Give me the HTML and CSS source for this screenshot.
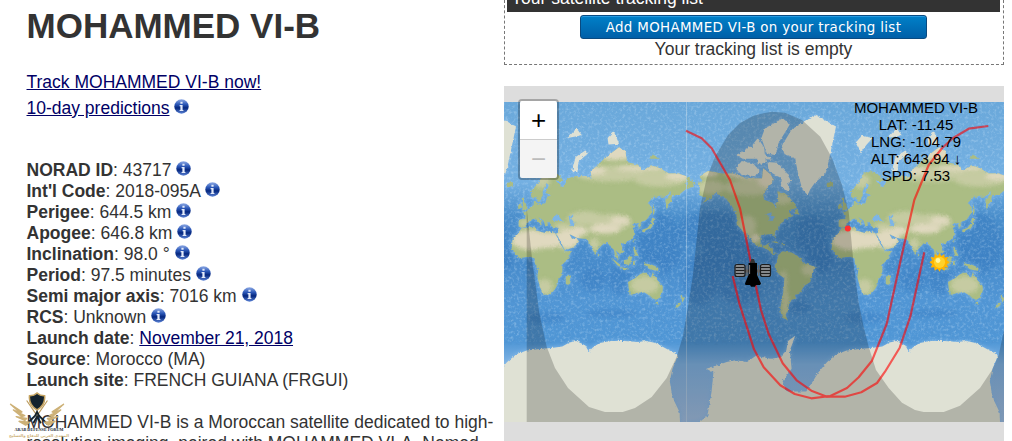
FILE: index.html
```
<!DOCTYPE html>
<html lang="en">
<head>
    <meta charset="UTF-8">
    <meta name="viewport" content="width=device-width, initial-scale=1.0">
    <title>MOHAMMED VI-B</title>
    <link rel="stylesheet" href="styles.css">
</head>
<body>
    <svg class="defs" width="0" height="0">
        <defs>
            <linearGradient id="infoBlue" x1="0" y1="0" x2="0" y2="1">
                <stop offset="0" stop-color="#8da9e4"/>
                <stop offset="0.35" stop-color="#2c58b8"/>
                <stop offset="0.6" stop-color="#04267e"/>
                <stop offset="1" stop-color="#5b83d6"/>
            </linearGradient>
            <symbol id="info" viewBox="0 0 15 15">
                <circle cx="7.5" cy="7.5" r="7.2" fill="url(#infoBlue)"/>
                <path d="M6.4 2.8h2.2v2H6.4zM5.6 6.1h3v4.8h.8v1.1H5.6v-1.1h.8V7.2h-.8z" fill="#e4ebfa"/>
            </symbol>
        </defs>
    </svg>

    <div class="page">
        <div class="details">
            <h1>MOHAMMED VI-B</h1>
            <div class="links">
                <div><a href="#">Track MOHAMMED VI-B now!</a></div>
                <div><a href="#">10-day predictions</a> <svg class="info"><use href="#info"/></svg></div>
            </div>
            <div class="data">
                <div><b>NORAD ID</b>: 43717 <svg class="info"><use href="#info"/></svg></div>
                <div><b>Int'l Code</b>: 2018-095A <svg class="info"><use href="#info"/></svg></div>
                <div><b>Perigee</b>: 644.5 km <svg class="info"><use href="#info"/></svg></div>
                <div><b>Apogee</b>: 646.8 km <svg class="info"><use href="#info"/></svg></div>
                <div><b>Inclination</b>: 98.0 ° <svg class="info"><use href="#info"/></svg></div>
                <div><b>Period</b>: 97.5 minutes <svg class="info"><use href="#info"/></svg></div>
                <div><b>Semi major axis</b>: 7016 km <svg class="info"><use href="#info"/></svg></div>
                <div><b>RCS</b>: Unknown <svg class="info"><use href="#info"/></svg></div>
                <div><b>Launch date</b>: <a href="#">November 21, 2018</a></div>
                <div><b>Source</b>: Morocco (MA)</div>
                <div><b>Launch site</b>: FRENCH GUIANA (FRGUI)</div>
            </div>
            <p class="about">MOHAMMED VI-B is a Moroccan satellite dedicated to high-<br>resolution imaging, paired with MOHAMMED VI-A. Named</p>
        </div>

        <div class="side">
            <div class="tracking">
                <div class="tracking-title">Your satellite tracking list</div>
                <button class="add">Add MOHAMMED VI-B on your tracking list</button>
                <div class="empty">Your tracking list is empty</div>
            </div>

            <div class="map">
                <svg class="world" viewBox="504 102 500 320">
                    <defs>
                        <linearGradient id="sea" x1="0" y1="0" x2="0" y2="1">
                            <stop offset="0" stop-color="#6aa8da"/>
                            <stop offset="0.25" stop-color="#74b0e2"/>
                            <stop offset="0.36" stop-color="#4a8ecb"/>
                            <stop offset="0.5" stop-color="#478bcb"/>
                            <stop offset="0.62" stop-color="#5196d5"/>
                            <stop offset="0.75" stop-color="#5097d6"/>
                            <stop offset="0.82" stop-color="#82b4e4"/>
                            <stop offset="1" stop-color="#a3bfe2"/>
                        </linearGradient>
                        <filter id="grain" x="0" y="0" width="1" height="1">
                            <feTurbulence type="fractalNoise" baseFrequency="0.32" numOctaves="3" seed="4"/>
                            <feColorMatrix values="0 0 0 0 0.08  0 0 0 0 0.28  0 0 0 0 0.6  2.6 0 0 0 -1.22"/>
                        </filter>
                        <filter id="foam" x="0" y="0" width="1" height="1">
                            <feTurbulence type="fractalNoise" baseFrequency="0.35" numOctaves="3" seed="9"/>
                            <feColorMatrix values="0 0 0 0 0.75  0 0 0 0 0.88  0 0 0 0 1  0 2.6 0 0 -1.25"/>
                        </filter>
                        <filter id="rough"><feTurbulence type="fractalNoise" baseFrequency="0.35" numOctaves="2" seed="2" result="n"/><feDisplacementMap in="SourceGraphic" in2="n" scale="3" xChannelSelector="R" yChannelSelector="G"/></filter>
                        <filter id="soft" x="-0.3" y="-0.3" width="1.6" height="1.6"><feGaussianBlur stdDeviation="2"/></filter>
                        <clipPath id="landClip"><path id="clipPathLand"/></clipPath>
                        <g id="water">
                            <g id="deep" fill="#2f72ba" opacity="0.32" filter="url(#soft)"></g>
                            <path id="shelf" class="shelf" filter="url(#soft)"/>
                        </g>
                        <g id="ground" filter="url(#rough)">
                            <path id="land" fill="#abbd84"/>
                            <g clip-path="url(#landClip)">
                                <g id="pale" fill="#cfd0ac" opacity="0.75" filter="url(#soft)"></g>
                                <g id="dry" fill="#e0d9bf" filter="url(#soft)"></g>
                            </g>
                            <path id="ice" fill="#dfe1d4"/>
                            <path id="lakes" fill="#7db5e6"/>
                        </g>
                    </defs>
                    <rect x="504" y="102" width="500" height="320" fill="url(#sea)"/>
                    <use href="#water" x="526.7"/>
                    <use href="#water" x="846.7"/>
                    <rect x="504" y="200" width="500" height="145" filter="url(#grain)" opacity="0.45"/>
                    <rect x="504" y="102" width="500" height="240" filter="url(#foam)" opacity="0.28"/>
                    <use href="#ground" x="526.7"/>
                    <use href="#ground" x="846.7"/>
                    <path d="M686.5 102V422" stroke="#dfe9ef" stroke-width="0.6" opacity="0.6"/>
                    <path class="night" d="M526.7 208L532.7 265 535 280 539.3 313 546.7 346.7 555 368 568 388 589 407 605 412H622.7L635 408 651.7 397 666.7 378 676.7 356.7 682.7 336.7 688 306.7 692.7 276.7 694.3 262 700 208 706.7 178 715 156.7 728 135 740 123 753 116 760 114 772 111.7 785 112.7 802 120 820.3 136.7 832 158 842 185 848.7 211.7 853.7 265 858.7 303 863.7 326.7 868.7 346.7 876 370 888.7 388 902 402.7 915 410 923.7 412H943.7L960 405.7 980 388 992 370 998.7 355 1004 330V422H526.7z"/>
                    <g class="orbit">
                        <path d="M686 130.7L701.7 138.3 711.7 148.3 730 180 740 208.3 750.7 261.7 756 286.7 761 310 768.7 334 782.7 363.3 797 380.7 811.3 390.7 827 396.7H844.7L861.3 392.3 877 383 885 371.7 899.7 347.7 910.3 316.7 924.3 252.3"/>
                        <path d="M732.7 276L739.3 303.3 754 349.3 763.7 367.3 780.3 385.3 794.7 394 811.3 398.3 830.3 396 847 388 858.7 377.3 872 360.7 886.7 324 900.7 260 914.3 200 928.7 165 942 148.3 952.7 138.3 968.7 128.7 988.3 126"/>
                    </g>
                    <circle cx="847.8" cy="228.4" r="3" fill="#ff3030"/>
                    <!-- sun -->
                    <path d="M939.5 253l1.8 3 3-2 .4 3.5 3.6-.4-1.5 3.2 2.8 2-2.8 2 1.5 3.3-3.6-.4-.4 3.5-3-1.9-1.8 3-1.8-3-3 1.9-.4-3.5-3.6.4 1.5-3.3-2.8-2 2.8-2-1.5-3.2 3.6.4.4-3.5 3 2z" fill="#ffb400"/>
                    <circle cx="939.5" cy="262.3" r="5.6" fill="#ffd22a"/>
                    <circle cx="938" cy="260.5" r="2.4" fill="#fff6a0"/>
                    <!-- satellite -->
                    <path d="M744 271h17" stroke-width="3" stroke="#555"/>
                    <g fill="#85888b" stroke="#1c1c1c" stroke-width="1.2">
                        <rect x="735" y="264.5" width="10" height="12" rx="2"/>
                        <rect x="760.5" y="264.5" width="10" height="12" rx="2"/>
                        <path d="M735.5 267.5h9M735.5 270.5h9M735.5 273.5h9M761 267.5h9M761 270.5h9M761 273.5h9"/>
                    </g>
                    <path d="M747 265v11M758.5 265v11" stroke="#666" stroke-width="1.4"/>
                    <path d="M749.8 263l1.6-4h2.4l1.6 4z" fill="#333"/>
                    <path d="M748.5 263h8.5v12l4 8.5-1 1.5h-4l-1 1.8h-4l-1-1.8h-4.5l-.5-1.5 3.5-8.5z" fill="#000"/>
                    <path d="M749.5 265v9" stroke="#777" stroke-width="1.2"/>
                </svg>
                <div class="zoom">
                    <div class="zoom-in">+</div>
                    <div class="zoom-out">−</div>
                </div>
                <div class="position">
                    MOHAMMED VI-B<br>
                    LAT: -11.45<br>
                    LNG: -104.79<br>
                    ALT: 643.94 ↓<br>
                    SPD: 7.53
                </div>
            </div>
        </div>

        <div class="forum">
            <svg class="forum-logo" viewBox="0 0 60 37">
                <path d="M21 4q5 0 8-3 3 3 8 3 1 10-8 15Q20 14 21 4z" fill="#14232e" stroke="#c5a462" stroke-width="1.6"/>
                <path d="M29 25L18 9M29 25L40 9" stroke="#bb9b5d" stroke-width="1.2"/>
                <path d="M18 34l9-9 2-4 2 4 9 9M25 33l4-7 4 7" fill="none" stroke="#14232e" stroke-width="2"/>
                <path d="M1 13l12 8-2 1zM4 19l12 6-3 1zM7 26l11 2-2 2zM10 31l11 1-4 3zM57 13l-12 8 2 1zM54 19l-12 6 3 1zM51 26l-11 2 2 2zM48 31l-11 1 4 3z" fill="#cdb177" stroke="#cdb177" stroke-width="1.5" stroke-linejoin="round"/>
            </svg>
            <div class="forum-name">ARAB DEFENSE FORUM</div>
            <div class="forum-arabic" lang="ar" dir="rtl">المنتدى العربي للدفاع والتسليح</div>
        </div>
    </div>

    <script>
        // outlines are lon, lat pairs
        const land = [
            // Europe and Asia
            [-9,43, -9,37, -5.5,36, -2,37, 0,39, 3,42, 7,43.5, 10,44, 13,41, 16,38, 18,40, 13,45, 19,42, 21,37, 24,38, 23,40.5, 27,41, 26,39, 28,36.5, 36,36, 35,31.5, 33,30, 35,28, 39,21, 43,13, 52,16, 59,22, 56,26, 51,25, 48,30, 57,26, 67,25, 70,21, 73,17, 77,8, 80,14, 87,21, 91,22, 94,17, 98,14, 99,8, 103,1.5, 103,6, 100,13, 105,9, 109,12, 106,20, 111,21, 117,24, 122,30, 119,35, 122,38, 118,39, 125,40, 126,35, 129,36, 128,40, 135,43, 140,48, 141,53, 136,55, 143,59, 155,59, 164,62, 156,57, 157,51, 162,56, 164,60, 171,60, 179,63, 179.9,69, 170,70, 160,70, 150,72, 140,73, 130,71, 127,73, 113,74, 111,77, 104,78, 87,75, 80,73, 72,71, 73,68, 68,69, 60,69, 54,69, 46,68, 44,66, 40,64, 33,67, 41,67, 38,69, 28,71, 19,70, 13,66, 5,62, 5,59, 8,58, 11,59, 13,55.5, 16,57, 18,60, 18,62, 22,66, 25,65, 21,61, 28,60, 23,59, 21,55, 12,54, 10,57, 8,56, 8,54, 4,52, 0,49.5, -4,48.5, -1,46, -2,43.5],
            [-179.9,69, -170,66, -174,64, -179.9,63],
            // Africa
            [-6,35.5, 10,37, 11,33.5, 20,31, 22,33, 32,31, 37,21, 43,12, 51,12, 46,3, 40,-3, 40,-14, 35,-20, 35,-24, 32,-29, 27,-34, 19,-34.5, 15,-27, 12,-17, 13,-9, 9,-1, 9,4, 4,6, -8,4.5, -13,9, -17,15, -16,24, -10,30],
            [44,-16, 50,-15, 47,-25, 44,-24],
            // Britain, Ireland, Iceland
            [-5,50, 1,51, 0,53, -3,56, -3,58.5, -6,58, -4,54],
            [-10,52, -6,52, -6,55, -9,54.5],
            [-22,64, -14,65, -16,66.5, -23,66],
            // New Siberian islands
            [138,75, 150,75, 142,76.2],
            // Japan, Sakhalin, Taiwan
            [130,31, 135,34, 141,36, 142,40, 145,43.5, 141,45, 140,40, 136,36, 130,34],
            [142,46, 144,49, 143,54, 142,52],
            [120,22, 122,25, 120,24],
            // south east Asia
            [95,5, 104,-2, 106,-6, 102,-4],
            [105,-6, 114,-7, 115,-8.5, 106,-7.5],
            [109,1, 113,3, 117,7, 119,5, 117,1, 115,-4, 110,-2],
            [119,-5, 120,1, 125,1.5, 121,0, 123,-4, 121,-3],
            [131,-1, 141,-3, 147,-6, 150,-10, 142,-9, 138,-8],
            [120,14, 122,18, 122,14, 126,7, 122,7],
            [80,6, 82,8, 80,9.5],
            // Australia, Tasmania, New Zealand
            [114,-22, 122,-18, 127,-14, 131,-12, 136,-12, 136,-15, 140,-17.5, 142,-11, 146,-19, 153,-26, 153,-31, 150,-37, 146,-39, 140,-37.5, 136,-34, 131,-31.5, 124,-33, 116,-35, 115,-30],
            [145,-41, 148,-41, 147,-43.5],
            [173,-35, 178,-38, 175,-41.5],
            [173,-41, 173,-43.5, 168,-46.5, 167,-45],
            // North and Central America
            [-168,66, -162,67, -166,69, -156,71, -140,70, -128,70, -115,68.5, -105,68, -95,68, -94,72, -85,69.5, -82,67, -88,65, -94,60, -92,57, -82,55, -80,51.5, -79,55, -77,57, -78,62, -70,61, -65,59, -61,56, -56,52, -66,50, -64,48, -60,46, -66,44, -70,43.5, -71,41.5, -75,39, -76,35, -81,31, -80,26, -82,28, -84,30, -90,29.5, -97,27.5, -97,22, -95,18, -91,18.5, -87,21.5, -88,16, -83,15, -83,10, -78,9, -83,8, -88,13, -95,16, -105,20, -107,24, -112,30, -114,31, -110,23, -115,29, -118,34, -124,39, -124,47, -130,54, -138,59, -148,61, -153,58, -162,55, -158,58, -166,60, -165,64],
            [-59,47.5, -53,47, -56,51.5],
            [-85,22, -75,20, -80,23],
            [-74,18.5, -68.5,18.5, -72,20],
            // South America
            [-77,8, -72,12, -62,10.5, -52,5, -50,0, -44,-2.5, -35,-6, -39,-14, -41,-22, -48,-26, -53,-33.5, -58,-35, -57,-38, -62,-39, -65,-43, -66,-47, -69,-51, -66,-55, -73,-52, -75,-47, -73,-40, -71,-30, -70,-18, -76,-14, -81,-6, -80,-2, -78,3],
        ];

        const ice = [
            // Greenland
            [-44,60, -50,63, -54,69, -58,75, -70,76.3, -73,78.3, -62,81.5, -35,83.6, -12,82, -18,77, -22,72, -24,70, -36,66, -41,63],
            // Canadian arctic islands
            [-90,76.5, -80,76, -78,78, -75,79.5, -64,82.3, -72,83.2, -92,81.7, -96,80],
            [-124,76, -117,75, -105,75, -95,75, -84,74.7, -90,76, -98,77, -110,78.3, -116,77],
            [-100,73, -91,74, -93,78, -100,80, -106,78.5, -101,76],
            [-125,72, -118,69.5, -102,69, -98,71, -105,73.5, -118,74.3],
            [-66,62, -74,64.5, -73,68, -88,71, -89,74, -78,73.8, -68,70.5, -62,66.5, -67,66, -64,63],
            // Svalbard, Novaya Zemlya, Severnaya Zemlya, Franz Josef Land
            [10,79, 16,76.7, 22,78.5, 29,80, 17,80.4],
            [51,71, 57,70.5, 58,74, 69,76.5, 66,77.2, 55,75.5],
            [92,78.6, 104,78.8, 98,81.2, 91,80],
            [46,80, 62,80.5, 56,81.7],
            // Antarctica, with the peninsula and the Weddell and Ross seas
            [-180,-85.1, -158,-85.1, -152,-81, -150,-77, -158,-76, -145,-75, -135,-74, -125,-73.5, -112,-74, -102,-72, -95,-72.5, -85,-73, -75,-72.5, -68,-70, -66,-66, -58,-63.5, -60,-66, -64,-70, -62,-76, -72,-79, -65,-82, -50,-82, -38,-79, -32,-77, -22,-74, -12,-71.5, 0,-70, 15,-69.5, 30,-69, 40,-68.5, 48,-66.8, 56,-66, 66,-68, 70,-70.5, 74,-69, 82,-67, 95,-66, 110,-66, 125,-66.5, 135,-66, 145,-67, 155,-69, 166,-71, 170,-72, 164,-76, 161,-79, 164,-82, 172,-84, 173,-86, -180,-86],
            [-72,-86, -180,-86, -158,-84.5, -72,-84.5],
            [-72,-81, 0,-81, 165,-82, 172,-86, -72,-86],
        ];

        const lakes = [
            [47,46, 53,46, 50,44, 54,40, 53,37, 49,38],
            [28,42, 34,42, 41,41.5, 38,44, 36,46, 31,46.5],
            [-92,47, -85,48.5, -84,46, -80,45, -83,42, -87,42, -87,46],
        ];

        // centre lon, lat and the two radii in pixels
        const dry = [
            [5,24,20,10], [24,24,16,8], [46,25,12,10], [58,33,10,5], [88,35,16,5], [105,42,10,4],
            [-103,26,5,4], [-100,71,34,9], [-80,67,18,8], [100,77,22,9], [72,71,16,4], [130,72,26,3],
            [172,69,14,4], [-155,70,10,3],
        ];

        const pale = [
            [66,44,18,7], [95,41,20,8], [133,-25,14,9], [20,-27,8,8], [-112,38,9,10], [-69,-42,4,14],
            [-71,-22,4,12], [-42,-9,8,6], [-110,64,25,8], [-72,58,10,6], [95,70,35,8], [150,68,26,8],
            [-153,64,14,7], [16,67,9,7], [-3,40,5,4], [40,36,8,5], [76,20,5,6],
        ];

        const deep = [
            [-150,35,35,18], [150,20,22,30], [-135,5,25,22], [-40,30,16,18], [-30,5,12,16], [75,-20,13,12],
            [105,-20,12,15], [-55,-45,13,7], [-120,-30,22,14], [20,-53,20,6], [95,-50,26,4], [-165,-20,18,25],
        ];

        const x = lon => lon / 360 * 320;
        const y = lat => 262 - 320 / (2 * Math.PI) * Math.log(Math.tan(Math.PI / 4 + lat * Math.PI / 360));

        function outline(shapes) {
            return shapes.map(s => {
                let d = '';
                for (let i = 0; i < s.length; i += 2) {
                    d += (i ? 'L' : 'M') + x(s[i]).toFixed(1) + ' ' + y(s[i + 1]).toFixed(1);
                }
                return d + 'z';
            }).join('');
        }

        function blobs(list) {
            return list.map(([lon, lat, rx, ry]) =>
                `<ellipse cx="${x(lon)}" cy="${y(lat)}" rx="${rx}" ry="${ry}"/>`).join('');
        }

        document.getElementById('land').setAttribute('d', outline(land));
        document.getElementById('clipPathLand').setAttribute('d', outline(land));
        document.getElementById('shelf').setAttribute('d', outline(land.concat(ice)));
        document.getElementById('ice').setAttribute('d', outline(ice));
        document.getElementById('lakes').setAttribute('d', outline(lakes));
        document.getElementById('dry').innerHTML = blobs(dry);
        document.getElementById('pale').innerHTML = blobs(pale);
        document.getElementById('deep').innerHTML = blobs(deep);
    </script>
</body>
</html>
```
FILE: styles.css
```
* {
    margin: 0;
    padding: 0;
    box-sizing: border-box;
}

body {
    background: #fff;
    color: #333;
    font-family: "Liberation Sans", Arial, sans-serif;
    font-size: 17.5px;
    line-height: 21px;
    overflow: hidden;
}

.defs {
    position: absolute;
}

.page {
    position: relative;
    display: flex;
    height: 441px;
    overflow: hidden;
}

.details {
    width: 504px;
    padding: 5px 0 0 26.5px;
    white-space: nowrap;
}

h1 {
    font-size: 35px;
    line-height: 42px;
}

a {
    color: #000066;
}

.links {
    margin-top: 22px;
    line-height: 26px;
}

.data {
    margin-top: 39px;
}

.info {
    width: 15px;
    height: 15px;
    vertical-align: 0;
}

.about {
    margin-top: 21px;
}

.side {
    width: 500px;
}

.tracking {
    height: 65px;
    border: 1px dashed #777;
    border-top: 0;
    padding: 0 3px 0 2px;
    text-align: center;
}

.tracking-title {
    height: 12px;
    background: #333;
    color: #fff;
    line-height: 21px;
    text-align: left;
    padding: 0 0 3px 4px;
    overflow: hidden;
    display: flex;
    align-items: flex-end;
}

.add {
    display: block;
    width: 347px;
    height: 24px;
    margin: 3px auto 0;
    background: linear-gradient(#0080c8, #005fa8);
    border: 1px solid #0a4a80;
    border-radius: 3px;
    box-shadow: inset 0 1px 0 #2a9be0;
    color: #fff;
    font: 13.4px "DejaVu Sans", Verdana, sans-serif;
    letter-spacing: 0.33px;
    white-space: nowrap;
}

.map {
    position: relative;
    height: 360px;
    margin-top: 21px;
    padding-top: 16px;
    background: #ddd;
}

.world {
    display: block;
    width: 500px;
    height: 320px;
}

.shelf {
    fill: #84baea;
    stroke: #84baea;
    stroke-width: 1;
    opacity: 0.8;
}

.night {
    fill: #000;
    opacity: 0.2;
}

.orbit {
    fill: none;
    stroke: #ff0000;
    stroke-width: 2.2;
    stroke-linejoin: round;
    opacity: 0.6;
}

.zoom {
    position: absolute;
    left: 14px;
    top: 13px;
    width: 41px;
    border: 2px solid rgba(0, 0, 0, 0.25);
    border-radius: 4px;
    background-clip: padding-box;
    text-align: center;
    font-size: 26px;
    line-height: 39px;
    color: #000;
}

.zoom-in {
    height: 39px;
    background: #fff;
    border-bottom: 1px solid #ccc;
    border-radius: 2px 2px 0 0;
}

.zoom-out {
    height: 38px;
    background: #f4f4f4;
    color: #bbb;
    border-radius: 0 0 2px 2px;
}

.position {
    position: absolute;
    left: 332px;
    top: 13px;
    width: 160px;
    color: #000;
    font-size: 15px;
    line-height: 17px;
    text-align: center;
}

.forum {
    position: absolute;
    left: 8px;
    top: 392px;
    width: 62px;
    text-align: center;
    white-space: nowrap;
}

.forum-logo {
    display: block;
    width: 60px;
    height: 35px;
}

.forum-name {
    color: #14232e;
    font: bold 4.2px/5px "Liberation Serif", serif;
}

.forum-arabic {
    color: #cdb177;
    font: bold 3.9px/8px "DejaVu Sans", sans-serif;
}
```
